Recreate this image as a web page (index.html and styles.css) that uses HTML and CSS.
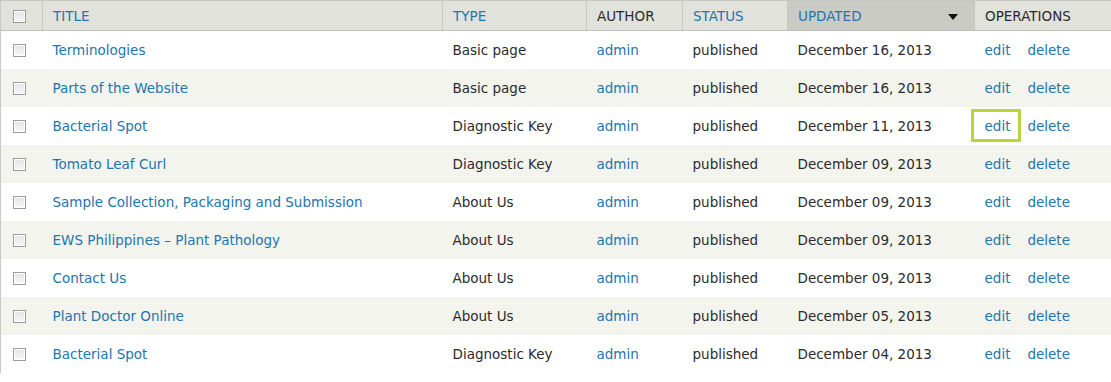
FILE: index.html
```html
<!DOCTYPE html>
<html>
<head>
<meta charset="utf-8">
<link rel="stylesheet" href="styles.css">
</head>
<body>
<table class="content-table">
  <colgroup>
    <col class="c-select"><col class="c-title"><col class="c-type"><col class="c-author"><col class="c-status"><col class="c-updated"><col class="c-ops">
  </colgroup>
  <thead>
    <tr>
      <th class="select"><span class="cb"></span></th>
      <th><a href="#">TITLE</a></th>
      <th><a href="#">TYPE</a></th>
      <th>AUTHOR</th>
      <th><a href="#">STATUS</a></th>
      <th class="active"><a href="#">UPDATED</a><span class="arrow"></span></th>
      <th>OPERATIONS</th>
    </tr>
  </thead>
  <tbody>
    <tr><td class="select"><span class="cb"></span></td><td><a href="#">Terminologies</a></td><td>Basic page</td><td><a href="#">admin</a></td><td>published</td><td>December 16, 2013</td><td class="ops"><a href="#">edit</a><a href="#">delete</a></td></tr>
    <tr class="even"><td class="select"><span class="cb"></span></td><td><a href="#">Parts of the Website</a></td><td>Basic page</td><td><a href="#">admin</a></td><td>published</td><td>December 16, 2013</td><td class="ops"><a href="#">edit</a><a href="#">delete</a></td></tr>
    <tr><td class="select"><span class="cb"></span></td><td><a href="#">Bacterial Spot</a></td><td>Diagnostic Key</td><td><a href="#">admin</a></td><td>published</td><td>December 11, 2013</td><td class="ops"><a href="#" class="focused">edit</a><a href="#">delete</a></td></tr>
    <tr class="even"><td class="select"><span class="cb"></span></td><td><a href="#">Tomato Leaf Curl</a></td><td>Diagnostic Key</td><td><a href="#">admin</a></td><td>published</td><td>December 09, 2013</td><td class="ops"><a href="#">edit</a><a href="#">delete</a></td></tr>
    <tr><td class="select"><span class="cb"></span></td><td><a href="#">Sample Collection, Packaging and Submission</a></td><td>About Us</td><td><a href="#">admin</a></td><td>published</td><td>December 09, 2013</td><td class="ops"><a href="#">edit</a><a href="#">delete</a></td></tr>
    <tr class="even"><td class="select"><span class="cb"></span></td><td><a href="#">EWS Philippines – Plant Pathology</a></td><td>About Us</td><td><a href="#">admin</a></td><td>published</td><td>December 09, 2013</td><td class="ops"><a href="#">edit</a><a href="#">delete</a></td></tr>
    <tr><td class="select"><span class="cb"></span></td><td><a href="#">Contact Us</a></td><td>About Us</td><td><a href="#">admin</a></td><td>published</td><td>December 09, 2013</td><td class="ops"><a href="#">edit</a><a href="#">delete</a></td></tr>
    <tr class="even"><td class="select"><span class="cb"></span></td><td><a href="#">Plant Doctor Online</a></td><td>About Us</td><td><a href="#">admin</a></td><td>published</td><td>December 05, 2013</td><td class="ops"><a href="#">edit</a><a href="#">delete</a></td></tr>
    <tr><td class="select"><span class="cb"></span></td><td><a href="#">Bacterial Spot</a></td><td>Diagnostic Key</td><td><a href="#">admin</a></td><td>published</td><td>December 04, 2013</td><td class="ops"><a href="#">edit</a><a href="#">delete</a></td></tr>
  </tbody>
</table>
</body>
</html>
```
FILE: styles.css
```css
html, body {
  margin: 0;
  padding: 0;
  background: #fff;
}
body {
  font-family: "DejaVu Sans", Verdana, sans-serif;
  font-size: 13.5px;
  color: #2b2b2b;
}
a {
  color: #2275ad;
  text-decoration: none;
}
.content-table {
  width: 1111px;
  table-layout: fixed;
  border-collapse: collapse;
  border-left: 1px solid #c9c9c9;
}
.c-select { width: 42px; }
.c-title { width: 400px; }
.c-type { width: 144px; }
.c-author { width: 96px; }
.c-status { width: 105px; }
.c-updated { width: 187px; }
.c-ops { width: 137px; }

thead th {
  height: 30px;
  padding: 0 10px;
  background: #e1e2dc;
  border-top: 1px solid #c6c6c2;
  border-bottom: 1px solid #bebfb9;
  border-left: 1px solid #c9c9c3;
  text-align: left;
  font-weight: normal;
  color: #2b2b2b;
  white-space: nowrap;
  box-sizing: border-box;
}
thead th:first-child { border-left: none; }
thead th.active {
  background: #cbcbc5;
  position: relative;
}
.arrow {
  position: absolute;
  right: 16px;
  top: 13px;
  width: 0;
  height: 0;
  border-left: 5px solid transparent;
  border-right: 5px solid transparent;
  border-top: 6px solid #111;
}
td {
  height: 38px;
  padding: 0 10px;
  white-space: nowrap;
  box-sizing: border-box;
}
tr.even td { background: #f3f4ee; }
.select { padding: 0 0 0 12px; }
.cb {
  display: inline-block;
  width: 11px;
  height: 11px;
  border: 1px solid #9c9c9c;
  background: linear-gradient(#e4e4e4, #f7f7f7);
  box-shadow: inset 0 0 0 1px #fff;
  vertical-align: middle;
}
.ops a { margin-right: 17px; }
.ops a:last-child { margin-right: 0; }
.focused {
  position: relative;
}
.focused::after {
  content: "";
  position: absolute;
  left: -14px;
  right: -11px;
  top: -9px;
  bottom: -8px;
  border: 3px solid #bcd43a;
}
```
